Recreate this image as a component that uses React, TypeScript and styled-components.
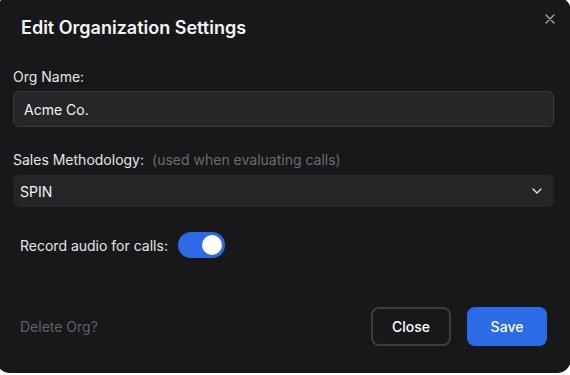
import React, { useState } from 'react';
import styled, { createGlobalStyle } from 'styled-components';

const GlobalStyle = createGlobalStyle`
  html, body {
    margin: 0;
    padding: 0;
    background: #ffffff;
    overflow: hidden;
  }
  body {
    font-family: Inter, "Noto Sans", "Liberation Sans", sans-serif;
    -webkit-font-smoothing: antialiased;
  }
`;

const Dialog = styled.div`
  position: relative;
  box-sizing: border-box;
  margin: -3px 0 0 -4px;
  width: 575px;
  height: 376px;
  background-color: #18181b;
  border-radius: 14px;
  display: flex;
  flex-direction: column;
  color: #e4e4e7;
`;

const Header = styled.div`
  padding: 19px 25px 0;
`;

const Title = styled.h2`
  margin: 0;
  font-size: 18px;
  line-height: 24px;
  font-weight: 600;
  color: #f4f4f5;
  letter-spacing: 0;
`;

const CloseIcon = styled.button`
  all: unset;
  position: absolute;
  top: 16px;
  right: 15px;
  width: 12px;
  height: 12px;
  display: flex;
  align-items: center;
  justify-content: center;
  color: #a1a1aa;
  cursor: pointer;
`;

const Body = styled.div`
  display: flex;
  flex-direction: column;
  padding: 27px 17px 0;
`;

const Field = styled.div<{ $gap: number; $space?: number }>`
  display: flex;
  flex-direction: column;
  gap: ${(p) => p.$gap}px;
  margin-bottom: ${(p) => p.$space ?? 0}px;
`;

const Label = styled.label`
  font-size: 14px;
  line-height: 20px;
  color: #e4e4e7;
`;

const Hint = styled.span`
  color: #6b6b72;
  margin-left: 8px;
`;

const TextInput = styled.input`
  box-sizing: border-box;
  height: 36px;
  width: 100%;
  padding: 0 10px;
  background: #262629;
  border: 1px solid #3a3a3e;
  border-radius: 6px;
  color: #f4f4f5;
  font-family: inherit;
  font-size: 14px;
  outline: none;
`;

const Select = styled.div`
  box-sizing: border-box;
  height: 32px;
  display: flex;
  align-items: center;
  justify-content: space-between;
  padding: 0 12px 0 7px;
  background: #252528;
  border-radius: 6px;
  font-size: 14px;
  color: #f4f4f5;
`;

const ToggleRow = styled.div`
  display: flex;
  align-items: center;
  gap: 10px;
  padding-left: 7px;
  font-size: 14px;
  color: #e4e4e7;
`;

const Switch = styled.button<{ $on: boolean }>`
  all: unset;
  box-sizing: border-box;
  width: 47px;
  height: 26px;
  border-radius: 13px;
  padding: 3px;
  display: flex;
  justify-content: ${(p) => (p.$on ? 'flex-end' : 'flex-start')};
  background: ${(p) => (p.$on ? '#2d6ae6' : '#3f3f46')};
  cursor: pointer;
`;

const Knob = styled.span`
  width: 20px;
  height: 20px;
  border-radius: 50%;
  background: #ffffff;
`;

const Footer = styled.div`
  margin-top: auto;
  display: flex;
  align-items: center;
  padding: 0 24px 27px;
`;

const DeleteLink = styled.span`
  font-size: 14px;
  color: #5f5f66;
  margin-right: auto;
`;

const Button = styled.button<{ $primary?: boolean }>`
  box-sizing: border-box;
  width: 80px;
  height: 39px;
  border-radius: 8px;
  font-family: inherit;
  font-size: 14px;
  font-weight: 500;
  color: #ffffff;
  cursor: pointer;
  background: ${(p) => (p.$primary ? '#2c6be6' : 'transparent')};
  border: ${(p) => (p.$primary ? 'none' : '2px solid #3d3d43')};
  & + & {
    margin-left: 16px;
  }
`;

export default function App() {
  const [record, setRecord] = useState(true);

  return (
    <>
      <GlobalStyle />
      <Dialog>
        <Header>
          <Title>Edit Organization Settings</Title>
        </Header>
        <CloseIcon aria-label="Close">
          <svg width="10" height="10" viewBox="0 0 10 10" fill="none">
            <path d="M1 1L9 9M9 1L1 9" stroke="currentColor" strokeWidth="1.4" strokeLinecap="round" />
          </svg>
        </CloseIcon>

        <Body>
          <Field $gap={4} $space={23}>
            <Label>Org Name:</Label>
            <TextInput defaultValue="Acme Co." />
          </Field>

          <Field $gap={5} $space={25}>
            <Label>
              Sales Methodology:<Hint>(used when evaluating calls)</Hint>
            </Label>
            <Select>
              <span>SPIN</span>
              <svg width="10" height="6" viewBox="0 0 10 6" fill="none">
                <path d="M1 1L5 5L9 1" stroke="#e4e4e7" strokeWidth="1.4" strokeLinecap="round" strokeLinejoin="round" />
              </svg>
            </Select>
          </Field>

          <ToggleRow>
            <span>Record audio for calls:</span>
            <Switch $on={record} onClick={() => setRecord(!record)}>
              <Knob />
            </Switch>
          </ToggleRow>
        </Body>

        <Footer>
          <DeleteLink>Delete Org?</DeleteLink>
          <Button>Close</Button>
          <Button $primary>Save</Button>
        </Footer>
      </Dialog>
    </>
  );
}
